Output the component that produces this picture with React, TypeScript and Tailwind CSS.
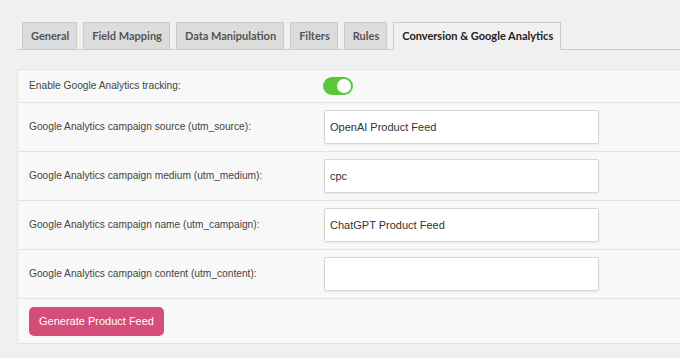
import React from 'react';

const tabs = ['General', 'Field Mapping', 'Data Manipulation', 'Filters', 'Rules', 'Conversion & Google Analytics'];

const fields = [
  { label: 'Google Analytics campaign source (utm_source):', value: 'OpenAI Product Feed' },
  { label: 'Google Analytics campaign medium (utm_medium):', value: 'cpc' },
  { label: 'Google Analytics campaign name (utm_campaign):', value: 'ChatGPT Product Feed' },
  { label: 'Google Analytics campaign content (utm_content):', value: '' },
];

const App: React.FC = () => {
  return (
    <div className="w-[680px] h-[358px] overflow-hidden bg-[#f0f0f0] pl-[17px] pt-[22px]">
      <div className="flex border-b border-[#cccccc] w-[700px] pl-[5px]">
        {tabs.map((t, i) => {
          const active = i === tabs.length - 1;
          return (
            <div
              key={t}
              className={
                active
                  ? 'mr-[6px] -mb-px h-[28px] pl-[8px] pr-[7px] flex items-center border border-b-0 border-[#cccccc] bg-[#f0f0f0] text-[11px] font-bold text-[#222] [font-family:Lato,sans-serif]'
                  : 'mr-[6px] h-[27px] pl-[8px] pr-[7px] flex items-center border border-b-0 border-[#cccccc] bg-[#dcdcdc] text-[11px] font-bold text-[#555] [font-family:Lato,sans-serif]'
              }
            >
              {t}
            </div>
          );
        })}
      </div>

      <div className="mt-[19px] w-[680px] bg-[#f8f8f8] border border-[#e2e2e2] [font-family:'Liberation_Sans',Arial,sans-serif]">
        <div className="h-[33px] flex items-center border-b border-[#e2e2e2] pl-[11px]">
          <div className="w-[294px] text-[10.2px] text-[#444]">Enable Google Analytics tracking:</div>
          <div className="w-[30px] h-[18px] rounded-full bg-[#5ac73b] flex items-center justify-end pr-[2px]">
            <div className="w-[14px] h-[14px] rounded-full bg-white" />
          </div>
        </div>
        {fields.map((f) => (
          <div key={f.label} className="h-[49px] flex items-center border-b border-[#e2e2e2] pl-[11px]">
            <div className="w-[295px] text-[10.2px] text-[#444]">{f.label}</div>
            <input
              readOnly
              value={f.value}
              className="w-[275px] h-[34px] bg-white border border-[#d6d6d6] rounded-[2px] shadow-[0_1px_2px_rgba(0,0,0,0.07)] px-[5px] text-[11px] text-[#333] outline-none"
            />
          </div>
        ))}
        <div className="h-[44px] flex items-center pl-[11px]">
          <button className="w-[135px] h-[29px] rounded-[5px] bg-[#d44e79] text-white text-[11px]">
            Generate Product Feed
          </button>
        </div>
      </div>
    </div>
  );
};

export default App;
